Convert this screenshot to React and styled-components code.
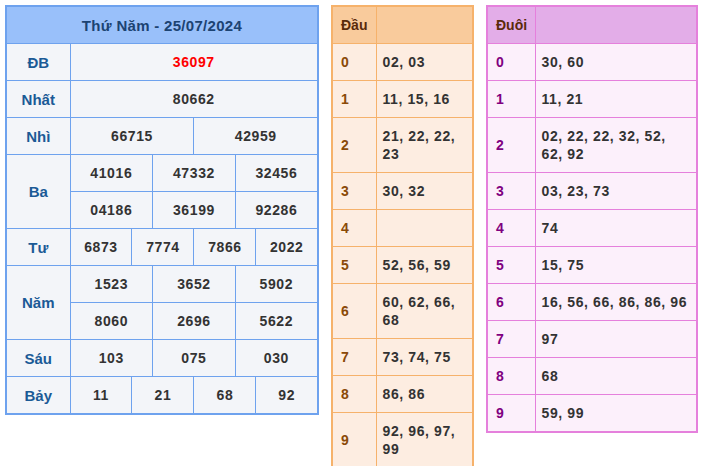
import React from "react";
import styled, { createGlobalStyle } from "styled-components";

const G = createGlobalStyle`
  body { margin: 0; background: #fff; font-family: "Liberation Sans", Arial, sans-serif; }
`;
const Page = styled.div`
  display: flex; align-items: flex-start; gap: 12px; padding: 5px 0 0 5px;
`;
const Table = styled.table`
  border-collapse: collapse; table-layout: fixed; width: ${p => p.$w}px;
  border: 2px solid ${p => p.$b};
  font-size: 14px; font-weight: bold; color: #333; background: ${p => p.$bg};
  td, th { border: 1px solid ${p => p.$b}; }
`;
const Title = styled.th`
  background: #99c0fa; color: #1c4372; height: 36px; font-size: 15px; padding: 0; letter-spacing: 0.3px;
`;
const Label = styled.td`
  color: #1b5a96; text-align: center; height: 36px; padding: 0; font-size: 15px;
`;
const Val = styled.td`
  text-align: center; padding: 0; height: 36px; letter-spacing: 0.6px;
  color: ${p => p.$red ? "#f00" : "#333"};
`;
const HHead = styled.th`
  background: ${p => p.$bg}; color: #5a2a0a; text-align: left; height: 36px; padding: 0 8px; font-size: 14px;
`;
const Key = styled.td`
  color: ${p => p.$c}; padding: 0 8px; height: 36px;
`;
const List = styled.td`
  padding: 9px 6px; line-height: 18px; letter-spacing: 0.6px;
`;

const left = [
  ["ĐB", [["36097", 12, true]]],
  ["Nhất", [["80662", 12]]],
  ["Nhì", [["66715", 6], ["42959", 6]]],
];
const cols12 = Array.from({ length: 12 });

const dau = ["02, 03","11, 15, 16","21, 22, 22, 23","30, 32","","52, 56, 59","60, 62, 66, 68","73, 74, 75","86, 86","92, 96, 97, 99"];
const duoi = ["30, 60","11, 21","02, 22, 22, 32, 52, 62, 92","03, 23, 73","74","15, 75","16, 56, 66, 86, 86, 96","97","68","59, 99"];

export default function App() {
  const multi = (label, rows) =>
    rows.map((r, i) => (
      <tr key={label + i}>
        {i === 0 && <Label rowSpan={rows.length}>{label}</Label>}
        {r.map(v => <Val key={v} colSpan={12 / r.length}>{v}</Val>)}
      </tr>
    ));
  return (
    <Page>
      <G />
      <Table $w={314} $b="#6ea2ee" $bg="#f3f5f9">
        <colgroup>
          <col style={{ width: 64 }} />
          {cols12.map((_, i) => <col key={i} />)}
        </colgroup>
        <thead><tr><Title colSpan={13}>Thứ Năm - 25/07/2024</Title></tr></thead>
        <tbody>
          {left.map(([l, vs]) => (
            <tr key={l}>
              <Label>{l}</Label>
              {vs.map(([v, s, r]) => <Val key={v} colSpan={s} $red={r}>{v}</Val>)}
            </tr>
          ))}
          {multi("Ba", [["41016","47332","32456"],["04186","36199","92286"]])}
          {multi("Tư", [["6873","7774","7866","2022"]])}
          {multi("Năm", [["1523","3652","5902"],["8060","2696","5622"]])}
          {multi("Sáu", [["103","075","030"]])}
          {multi("Bảy", [["11","21","68","92"]])}
        </tbody>
      </Table>
      <Table $w={143} $b="#f6b26b" $bg="#fdede1">
        <colgroup><col style={{ width: 44 }} /><col /></colgroup>
        <thead><tr><HHead $bg="#f9cb9c">Đầu</HHead><HHead $bg="#f9cb9c" /></tr></thead>
        <tbody>
          {dau.map((d, i) => (
            <tr key={i}><Key $c="#8a4a08">{i}</Key><List>{d}</List></tr>
          ))}
        </tbody>
      </Table>
      <Table $w={212} $b="#e580dc" $bg="#fcf0fb">
        <colgroup><col style={{ width: 48 }} /><col /></colgroup>
        <thead><tr><HHead $bg="#e3ade8">Đuôi</HHead><HHead $bg="#e3ade8" /></tr></thead>
        <tbody>
          {duoi.map((d, i) => (
            <tr key={i}><Key $c="#800080">{i}</Key><List>{d}</List></tr>
          ))}
        </tbody>
      </Table>
    </Page>
  );
}
